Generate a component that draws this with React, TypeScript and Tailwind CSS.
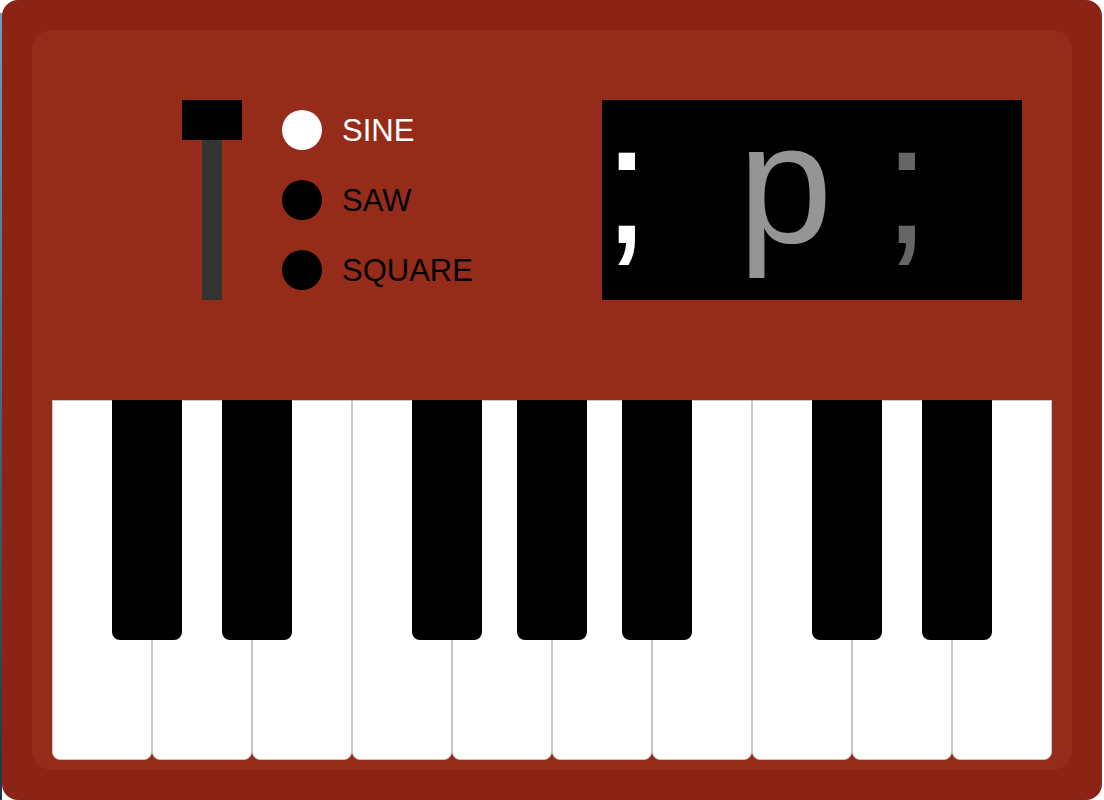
const whiteKeys = Array.from({ length: 10 }, (_, i) => i);
const blackKeys = [60, 170, 360, 465, 570, 760, 870];

const waves = [
  { name: "SINE", active: true },
  { name: "SAW", active: false },
  { name: "SQUARE", active: false },
];

const display = [
  { char: ";", color: "text-white", pad: "pl-[1px]" },
  { char: "p", color: "text-[#959595]", pad: "-ml-[4px]" },
  { char: ";", color: "text-[#666666]", pad: "pl-[5px]" },
];

const App = () => {
  return (
    <div className="flex min-h-[800px] bg-white">
      <div className="w-[2px] mt-[13px] bg-gradient-to-b from-[#7a98bd] to-[#26344d]" />
      <div className="w-[1100px] h-[800px] rounded-[16px] bg-[#8b2414] p-[30px]">
        <div className="h-full rounded-[20px] bg-[#952c1a] flex flex-col">
          <div className="h-[370px] flex items-start pt-[70px] pl-[150px] pr-[50px]">
            <div className="w-[60px] flex flex-col items-center">
              <div className="w-[60px] h-[40px] bg-black" />
              <div className="w-[20px] h-[160px] bg-[#333333]" />
            </div>
            <div className="ml-[40px] mt-[10px] flex flex-col gap-[30px]">
              {waves.map((wave) => (
                <div key={wave.name} className="flex items-center gap-[20px] h-[40px]">
                  <span
                    className={`w-[40px] h-[40px] rounded-full ${wave.active ? "bg-white" : "bg-black"}`}
                  />
                  <span
                    className={`text-[31px] leading-none font-['Liberation_Sans',Arial,sans-serif] ${wave.active ? "text-white" : "text-black"}`}
                  >
                    {wave.name}
                  </span>
                </div>
              ))}
            </div>
            <div className="ml-auto w-[420px] h-[200px] bg-black flex items-start">
              {display.map((d, index) => (
                <span
                  key={`${d.char}+${index}`}
                  className={`w-[140px] text-[170px] leading-[168px] font-['Liberation_Sans',Arial,sans-serif] ${d.color} ${d.pad}`}
                >
                  {d.char}
                </span>
              ))}
            </div>
          </div>
          <div className="px-[20px]">
            <div className="relative h-[360px] flex">
              {whiteKeys.map((k) => (
                <div
                  key={k}
                  className="w-[100px] h-full bg-white border border-[#c8c8c8] rounded-b-[8px]"
                />
              ))}
              {blackKeys.map((left) => (
                <div
                  key={left}
                  className="absolute top-0 w-[70px] h-[240px] bg-black rounded-b-[8px]"
                  style={{ left }}
                />
              ))}
            </div>
          </div>
        </div>
      </div>
    </div>
  );
};

export default App;
